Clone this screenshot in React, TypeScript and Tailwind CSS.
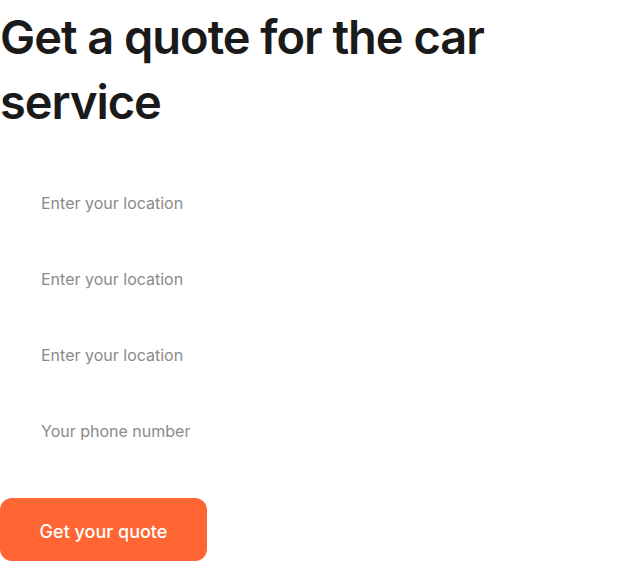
export default function App() {
  const fields = [
    "Enter your location",
    "Enter your location",
    "Enter your location",
    "Your phone number",
  ];
  return (
    <div className="w-[625px] h-[562px] bg-white overflow-hidden" style={{ fontFamily: "Inter, 'Noto Sans', sans-serif" }}>
      <h1 className="pt-[4px] text-[47px] leading-[65px] font-semibold tracking-[-0.022em] text-[#1a1a1a] w-[520px]">
        Get a quote for the car service
      </h1>
      <form className="mt-[39px] flex flex-col gap-4">
        {fields.map((f, i) => (
          <input
            key={i}
            placeholder={f}
            className="h-[60px] w-[400px] pl-[41px] text-[16px] bg-transparent outline-none placeholder:text-[#8a8a8a] text-[#1a1a1a]"
          />
        ))}
        <button
          type="button"
          className="mt-[21px] w-[207px] h-[63px] rounded-[12px] bg-[#ff6633] text-white text-[18px] font-medium pt-[3px]"
        >
          Get your quote
        </button>
      </form>
    </div>
  );
}
